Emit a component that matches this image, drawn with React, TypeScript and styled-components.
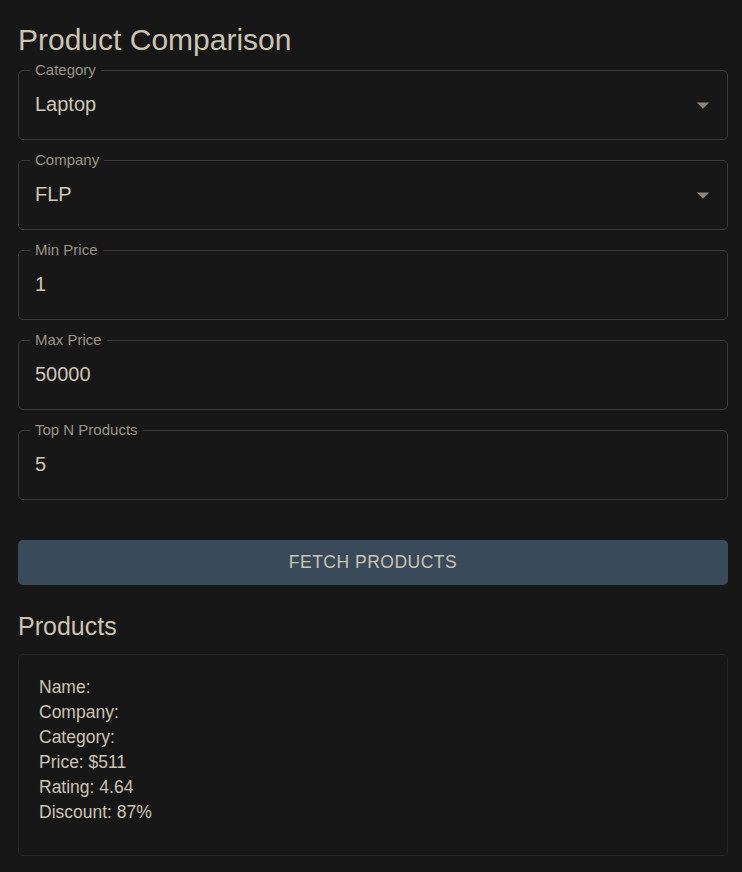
import React from "react";
import styled, { createGlobalStyle } from "styled-components";

const GlobalStyle = createGlobalStyle`
  html, body {
    margin: 0;
    padding: 0;
    background: #171717;
  }
  body {
    font-family: "Liberation Sans", Arial, sans-serif;
    color: #ccc3b3;
  }
  * { box-sizing: border-box; }
`;

const Page = styled.main`
  padding: 20px 14px 16px 18px;
  display: flex;
  flex-direction: column;
`;

const Title = styled.h1`
  margin: 0 0 10px;
  font-size: 30px;
  line-height: 40px;
  font-weight: 400;
  color: #ccc3b3;
`;

const Fields = styled.div`
  display: flex;
  flex-direction: column;
  gap: 20px;
`;

const Field = styled.div`
  position: relative;
  height: 70px;
  border: 1px solid #3a3a38;
  border-radius: 5px;
  display: flex;
  align-items: center;
  padding: 0 17px 2px 16px;
`;

const Label = styled.span`
  position: absolute;
  top: -9px;
  left: 11px;
  padding: 0 5px;
  background: #171717;
  font-size: 15px;
  line-height: 15px;
  color: #9a9386;
`;

const Value = styled.span`
  flex: 1;
  font-size: 20px;
  line-height: 28.75px;
  color: #cfc6b6;
`;

const Arrow = styled.svg`
  width: 30px;
  height: 30px;
  margin: 2px -8px 0 0;
  fill: #8a847a;
  flex: none;
`;

const Button = styled.button`
  margin-top: 40px;
  height: 45px;
  border: none;
  border-radius: 5px;
  background: #394a5a;
  color: #cbc3b3;
  font-family: "Liberation Sans", Arial, sans-serif;
  font-size: 17.5px;
  font-weight: 400;
  letter-spacing: 0.5px;
  text-transform: uppercase;
  cursor: pointer;
`;

const SectionTitle = styled.h2`
  margin: 21px 0 8px;
  font-size: 25px;
  line-height: 40px;
  font-weight: 400;
  color: #ccc3b3;
`;

const Card = styled.section`
  border: 1px solid #272727;
  border-radius: 5px;
  padding: 20px 20px 30px;
`;

const Line = styled.div`
  font-size: 17.5px;
  line-height: 25px;
  color: #ccc3b3;
`;

type FieldDef = { label: string; value: string; select?: boolean };

const fields: FieldDef[] = [
  { label: "Category", value: "Laptop", select: true },
  { label: "Company", value: "FLP", select: true },
  { label: "Min Price", value: "1" },
  { label: "Max Price", value: "50000" },
  { label: "Top N Products", value: "5" },
];

const product = [
  "Name:",
  "Company:",
  "Category:",
  "Price: $511",
  "Rating: 4.64",
  "Discount: 87%",
];

export default function App() {
  return (
    <>
      <GlobalStyle />
      <Page>
        <Title>Product Comparison</Title>
        <Fields>
          {fields.map((f) => (
            <Field key={f.label}>
              <Label>{f.label}</Label>
              <Value>{f.value}</Value>
              {f.select && (
                <Arrow viewBox="0 0 24 24" aria-hidden="true">
                  <path d="M7 10l5 5 5-5z" />
                </Arrow>
              )}
            </Field>
          ))}
        </Fields>
        <Button>Fetch Products</Button>
        <SectionTitle>Products</SectionTitle>
        <Card>
          {product.map((l) => (
            <Line key={l}>{l}</Line>
          ))}
        </Card>
      </Page>
    </>
  );
}
